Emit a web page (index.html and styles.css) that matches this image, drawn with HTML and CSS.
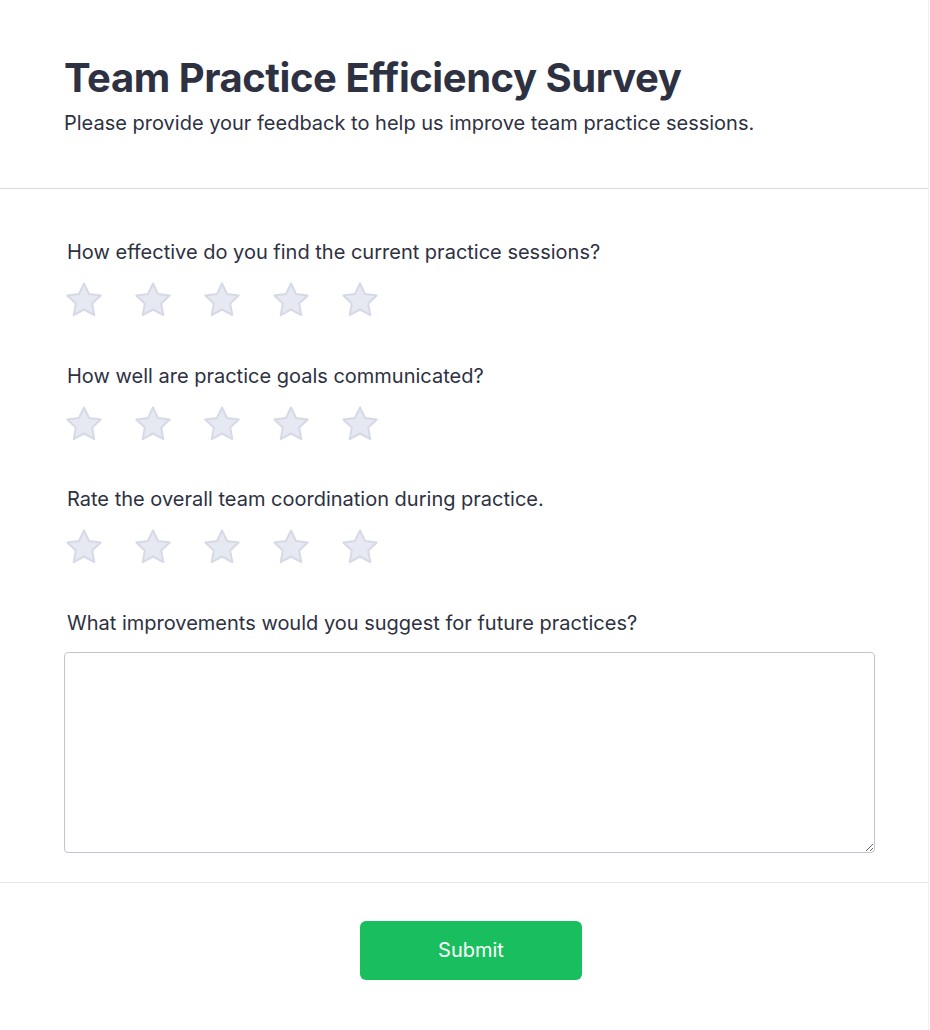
FILE: index.html
```html
<!DOCTYPE html>
<html>
<head>
<meta charset="utf-8">
<link rel="stylesheet" href="styles.css">
</head>
<body>
<div class="survey">
  <header class="head">
    <h1 class="title">Team Practice Efficiency Survey</h1>
    <p class="subtitle">Please provide your feedback to help us improve team practice sessions.</p>
  </header>
  <main class="body">
    <div class="question">
      <label class="qlabel">How effective do you find the current practice sessions?</label>
      <div class="stars">
        <svg class="star" viewBox="0 0 40 40"><path d="M20 3.5l5.1 10.6 11.6 1.5-8.5 8 2.1 11.5L20 29.5 9.7 35.1l2.1-11.5-8.5-8 11.6-1.5z"/></svg>
        <svg class="star" viewBox="0 0 40 40"><path d="M20 3.5l5.1 10.6 11.6 1.5-8.5 8 2.1 11.5L20 29.5 9.7 35.1l2.1-11.5-8.5-8 11.6-1.5z"/></svg>
        <svg class="star" viewBox="0 0 40 40"><path d="M20 3.5l5.1 10.6 11.6 1.5-8.5 8 2.1 11.5L20 29.5 9.7 35.1l2.1-11.5-8.5-8 11.6-1.5z"/></svg>
        <svg class="star" viewBox="0 0 40 40"><path d="M20 3.5l5.1 10.6 11.6 1.5-8.5 8 2.1 11.5L20 29.5 9.7 35.1l2.1-11.5-8.5-8 11.6-1.5z"/></svg>
        <svg class="star" viewBox="0 0 40 40"><path d="M20 3.5l5.1 10.6 11.6 1.5-8.5 8 2.1 11.5L20 29.5 9.7 35.1l2.1-11.5-8.5-8 11.6-1.5z"/></svg>
      </div>
    </div>
    <div class="question">
      <label class="qlabel">How well are practice goals communicated?</label>
      <div class="stars">
        <svg class="star" viewBox="0 0 40 40"><path d="M20 3.5l5.1 10.6 11.6 1.5-8.5 8 2.1 11.5L20 29.5 9.7 35.1l2.1-11.5-8.5-8 11.6-1.5z"/></svg>
        <svg class="star" viewBox="0 0 40 40"><path d="M20 3.5l5.1 10.6 11.6 1.5-8.5 8 2.1 11.5L20 29.5 9.7 35.1l2.1-11.5-8.5-8 11.6-1.5z"/></svg>
        <svg class="star" viewBox="0 0 40 40"><path d="M20 3.5l5.1 10.6 11.6 1.5-8.5 8 2.1 11.5L20 29.5 9.7 35.1l2.1-11.5-8.5-8 11.6-1.5z"/></svg>
        <svg class="star" viewBox="0 0 40 40"><path d="M20 3.5l5.1 10.6 11.6 1.5-8.5 8 2.1 11.5L20 29.5 9.7 35.1l2.1-11.5-8.5-8 11.6-1.5z"/></svg>
        <svg class="star" viewBox="0 0 40 40"><path d="M20 3.5l5.1 10.6 11.6 1.5-8.5 8 2.1 11.5L20 29.5 9.7 35.1l2.1-11.5-8.5-8 11.6-1.5z"/></svg>
      </div>
    </div>
    <div class="question">
      <label class="qlabel">Rate the overall team coordination during practice.</label>
      <div class="stars">
        <svg class="star" viewBox="0 0 40 40"><path d="M20 3.5l5.1 10.6 11.6 1.5-8.5 8 2.1 11.5L20 29.5 9.7 35.1l2.1-11.5-8.5-8 11.6-1.5z"/></svg>
        <svg class="star" viewBox="0 0 40 40"><path d="M20 3.5l5.1 10.6 11.6 1.5-8.5 8 2.1 11.5L20 29.5 9.7 35.1l2.1-11.5-8.5-8 11.6-1.5z"/></svg>
        <svg class="star" viewBox="0 0 40 40"><path d="M20 3.5l5.1 10.6 11.6 1.5-8.5 8 2.1 11.5L20 29.5 9.7 35.1l2.1-11.5-8.5-8 11.6-1.5z"/></svg>
        <svg class="star" viewBox="0 0 40 40"><path d="M20 3.5l5.1 10.6 11.6 1.5-8.5 8 2.1 11.5L20 29.5 9.7 35.1l2.1-11.5-8.5-8 11.6-1.5z"/></svg>
        <svg class="star" viewBox="0 0 40 40"><path d="M20 3.5l5.1 10.6 11.6 1.5-8.5 8 2.1 11.5L20 29.5 9.7 35.1l2.1-11.5-8.5-8 11.6-1.5z"/></svg>
      </div>
    </div>
    <div class="question last">
      <label class="qlabel">What improvements would you suggest for future practices?</label>
      <textarea class="answer"></textarea>
    </div>
  </main>
  <footer class="foot">
    <button class="submit">Submit</button>
  </footer>
</div>
</body>
</html>
```

FILE: styles.css
```css
html, body {
  margin: 0;
  padding: 0;
  background: #ffffff;
}
body {
  font-family: Inter, "Noto Sans", sans-serif;
  color: #2d3142;
}
.survey {
  width: 929px;
  border-right: 1px solid #f0f0f4;
  min-height: 1030px;
  box-sizing: border-box;
}
.head {
  padding: 54px 64px 52px;
  border-bottom: 1px solid #d9d9ea;
}
.title {
  margin: 0;
  font-size: 40px;
  line-height: 48px;
  font-weight: 700;
  letter-spacing: -0.45px;
  color: #2d3142;
}
.subtitle {
  margin: 8px 0 0;
  font-size: 20px;
  line-height: 26px;
  font-weight: 400;
  color: #2d3142;
}
.body {
  padding: 51px 53px 29px 64px;
  border-bottom: 1px solid #e6e8f0;
}
.question {
  display: flex;
  flex-direction: column;
  margin-bottom: 43.5px;
}
.question.last {
  margin-bottom: 0;
}
.qlabel {
  padding-left: 3px;
  font-size: 20px;
  line-height: 24px;
  font-weight: 400;
  color: #2d3142;
}
.stars {
  display: flex;
  gap: 29px;
  margin-top: 16px;
}
.star {
  width: 40px;
  height: 40px;
  display: block;
}
.star path {
  fill: #e6e8f2;
  stroke: #d6d9e6;
  stroke-width: 2;
  stroke-linejoin: round;
}
.answer {
  margin-top: 17px;
  height: 201px;
  box-sizing: border-box;
  border: 1px solid #c2c4d6;
  border-radius: 4px;
  font-family: inherit;
  font-size: 16px;
  resize: vertical;
  padding: 8px;
}
.foot {
  display: flex;
  justify-content: center;
  padding: 38px 50px 40px 64px;
}
.submit {
  width: 222px;
  height: 59px;
  border: none;
  border-radius: 6px;
  background: #19bf5e;
  color: #ffffff;
  font-family: Inter, "Noto Sans", sans-serif;
  font-size: 20px;
  font-weight: 400;
}
```
